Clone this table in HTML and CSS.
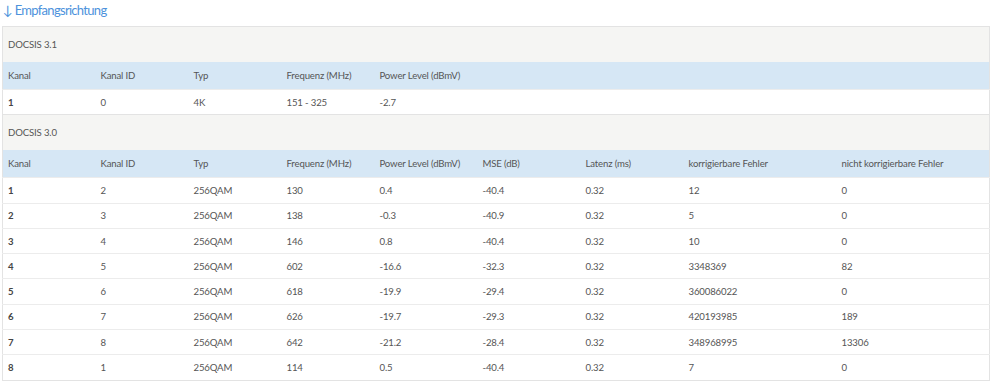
FILE: index.html
```html
<!DOCTYPE html>
<html lang="de">
<head>
    <meta charset="UTF-8">
    <title>Kanaldaten</title>
    <link rel="stylesheet" href="styles.css">
</head>
<body>
    <h2 class="direction">↓ Empfangsrichtung</h2>

    <table class="channels">
        <colgroup>
            <col class="c-s"><col class="c-s"><col class="c-s"><col class="c-s">
            <col class="c-m"><col class="c-m"><col class="c-m">
            <col class="c-l"><col class="c-l">
        </colgroup>
        <tbody>
            <tr class="section"><td colspan="9">DOCSIS 3.1</td></tr>
            <tr class="head">
                <td>Kanal</td><td>Kanal ID</td><td>Typ</td><td>Frequenz (MHz)</td><td>Power Level (dBmV)</td>
                <td></td><td></td><td></td><td></td>
            </tr>
            <tr>
                <td class="num">1</td><td>0</td><td>4K</td><td>151 - 325</td><td>-2.7</td>
                <td></td><td></td><td></td><td></td>
            </tr>

            <tr class="section"><td colspan="9">DOCSIS 3.0</td></tr>
            <tr class="head">
                <td>Kanal</td><td>Kanal ID</td><td>Typ</td><td>Frequenz (MHz)</td><td>Power Level (dBmV)</td>
                <td>MSE (dB)</td><td>Latenz (ms)</td><td>korrigierbare Fehler</td><td>nicht korrigierbare Fehler</td>
            </tr>
            <tr><td class="num">1</td><td>2</td><td>256QAM</td><td>130</td><td>0.4</td><td>-40.4</td><td>0.32</td><td>12</td><td>0</td></tr>
            <tr><td class="num">2</td><td>3</td><td>256QAM</td><td>138</td><td>-0.3</td><td>-40.9</td><td>0.32</td><td>5</td><td>0</td></tr>
            <tr><td class="num">3</td><td>4</td><td>256QAM</td><td>146</td><td>0.8</td><td>-40.4</td><td>0.32</td><td>10</td><td>0</td></tr>
            <tr><td class="num">4</td><td>5</td><td>256QAM</td><td>602</td><td>-16.6</td><td>-32.3</td><td>0.32</td><td>3348369</td><td>82</td></tr>
            <tr><td class="num">5</td><td>6</td><td>256QAM</td><td>618</td><td>-19.9</td><td>-29.4</td><td>0.32</td><td>360086022</td><td>0</td></tr>
            <tr><td class="num">6</td><td>7</td><td>256QAM</td><td>626</td><td>-19.7</td><td>-29.3</td><td>0.32</td><td>420193985</td><td>189</td></tr>
            <tr><td class="num">7</td><td>8</td><td>256QAM</td><td>642</td><td>-21.2</td><td>-28.4</td><td>0.32</td><td>348968995</td><td>13306</td></tr>
            <tr><td class="num">8</td><td>1</td><td>256QAM</td><td>114</td><td>0.5</td><td>-40.4</td><td>0.32</td><td>7</td><td>0</td></tr>
        </tbody>
    </table>
</body>
</html>
```

FILE: styles.css
```css
body {
    margin: 0;
    font-family: Lato, "Open Sans", sans-serif;
    color: #555;
    background-color: white;
}
.direction {
    margin: 0 0 6px 3px;
    font-size: 13px;
    letter-spacing: -0.7px;
    line-height: 20px;
    font-weight: normal;
    color: #4d92dc;
}
.channels {
    margin-left: 2px;
    width: 988px;
    table-layout: fixed;
    border-collapse: collapse;
    border: 1px solid #e3e3e3;
    font-size: 9.6px;
    letter-spacing: -0.15px;
}
.c-s { width: 93px; }
.c-m { width: 103px; }
.c-l { width: 153px; }
.channels tr {
    height: 25.3px;
}
.channels td {
    padding: 0 5px;
    line-height: 13px;
    border-top: 1px solid #ececec;
    white-space: nowrap;
    vertical-align: middle;
}
.channels .section {
    height: 35px;
}
.channels .section td {
    background-color: #f5f5f3;
    border-top: 1px solid #e3e3e3;
}
.channels .head {
    height: 28px;
}
.channels .head td {
    background-color: #d6e7f5;
    border-top: none;
}
.channels .num {
    font-weight: bold;
    color: #444;
}
```
